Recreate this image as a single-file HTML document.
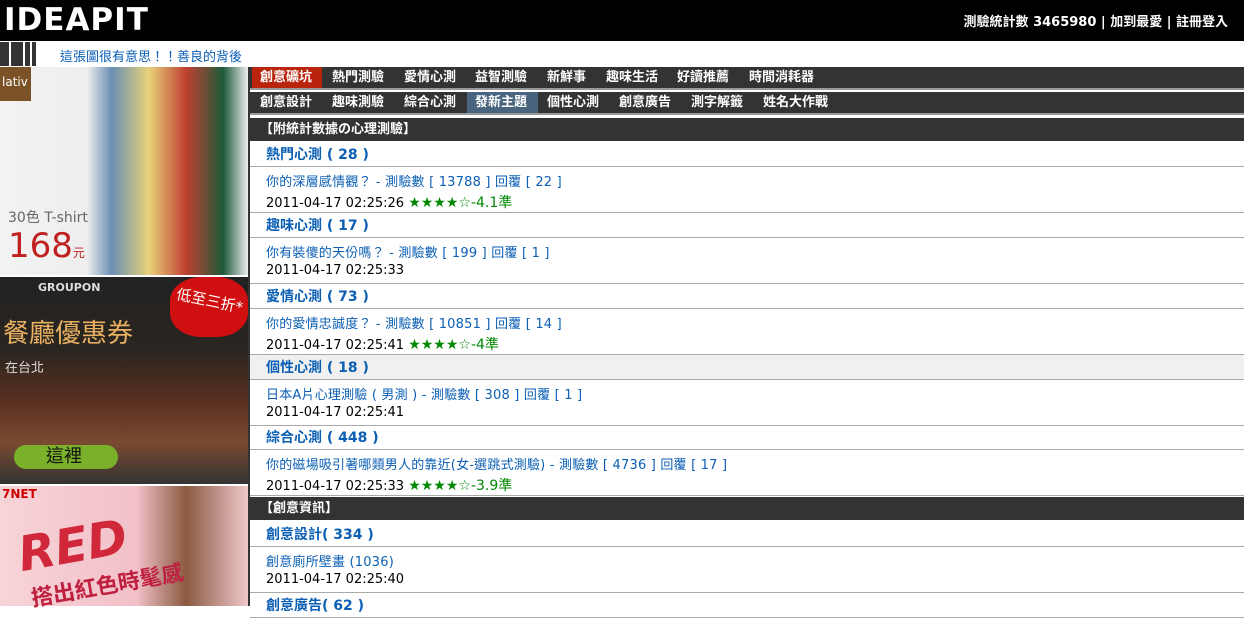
<!DOCTYPE html>
<html><head><meta charset="utf-8"><style>
*{margin:0;padding:0;box-sizing:border-box}
body{width:1244px;height:606px;overflow:hidden;background:#fff;font-family:"DejaVu Sans","Noto Sans CJK TC",sans-serif;position:relative}
.a{position:absolute}
#hd{left:0;top:0;width:1244px;height:41px;background:#000}
#logo{left:4px;top:2px;color:#fff;font-family:"DejaVu Sans",sans-serif;font-weight:bold;font-size:31px;letter-spacing:1px;line-height:36px}
#tr{right:16px;top:11px;color:#fff;font-size:13px;font-weight:bold}
.bars{left:0;top:42px;height:24px}
.bars i{position:absolute;top:0;width:9px;height:24px;background:#333}
#news{left:60px;top:46px;color:#0b5fb4;font-size:13px}
.nav{left:250px;width:994px;height:23px;background:#333;color:#fff;font-size:13px;font-weight:bold;border-bottom:2px solid #999}
.nav span{position:absolute;top:0;height:21px;line-height:21px;padding:0 8px}
.sec{left:250px;width:994px;height:23px;background:#333;color:#fff;font-size:13px;font-weight:bold;line-height:23px;padding-left:10px}
.cat{left:250px;width:994px;height:25px;border-bottom:1px solid #aaa;color:#0b5fb4;font-weight:bold;font-size:14px;line-height:27px;padding-left:16px}
.it{left:250px;width:994px;height:46px;border-bottom:1px solid #aaa;font-size:13px;padding-left:16px}
.it .l{color:#0b5fb4;position:absolute;top:4px;left:16px;white-space:nowrap;letter-spacing:0.2px}
.it .d{color:#000;position:absolute;top:25px;left:16px;white-space:nowrap}
.g{color:#080;font-size:14px}
#vl{left:248px;top:67px;width:2px;height:539px;background:#333}
</style></head><body>
<div id="hd" class="a"></div>
<div id="logo" class="a">IDEAPIT</div>
<div id="tr" class="a">測驗統計數 3465980 | 加到最愛 | 註冊登入</div>
<div class="a bars"><i style="left:0"></i><i style="left:11px"></i><i style="left:18px;width:5px"></i><i style="left:25px;width:5px"></i><i style="left:32px;width:4px"></i></div>
<div id="news" class="a">這張圖很有意思！！善良的背後</div>

<div class="a" style="left:0;top:67px;width:248px;height:208px;background:linear-gradient(90deg,#f2f2f2 0,#eee 35%,#6a8fb4 45%,#e8d27a 60%,#c04030 75%,#1d5a3a 90%,#eee 100%)"></div>
<div class="a" style="left:0;top:67px;width:31px;height:34px;background:#7a5226;color:#fff;font-size:12px;padding:8px 2px">lativ</div>
<div class="a" style="left:8px;top:207px;color:#666;font-size:14px">30色 T-shirt</div>
<div class="a" style="left:8px;top:226px;color:#c02020;font-size:34px">168<span style="font-size:12px">元</span></div>
<div class="a" style="left:0;top:277px;width:248px;height:207px;background:linear-gradient(180deg,#222 0,#2a2520 35%,#5a3020 60%,#7a4a30 80%,#333 100%)"></div>
<div class="a" style="left:170px;top:277px;width:78px;height:60px;background:#d01010;border-radius:40%"></div>
<div class="a" style="left:176px;top:290px;color:#fff;font-size:15px;transform:rotate(12deg)">低至三折*</div>
<div class="a" style="left:38px;top:281px;color:#ddd;font-size:11px;font-weight:bold">GROUPON</div>
<div class="a" style="left:3px;top:313px;color:#e8b060;font-size:26px">餐廳優惠券</div>
<div class="a" style="left:5px;top:357px;color:#ddd;font-size:13px">在台北</div>
<div class="a" style="left:14px;top:445px;width:104px;height:24px;background:#7ab02a;border-radius:12px;color:#111;font-size:18px;padding-left:32px;line-height:24px">這裡</div>
<div class="a" style="left:0;top:486px;width:248px;height:120px;background:linear-gradient(90deg,#f7d4d8 0,#f2c0c8 55%,#8a5a40 75%,#f0c8cc 100%)"></div>
<div class="a" style="left:18px;top:518px;color:#d0283a;font-size:48px;font-weight:bold;font-style:italic;transform:rotate(-10deg)">RED</div>
<div class="a" style="left:2px;top:487px;color:#c00;font-size:12px;font-weight:bold">7NET</div>
<div class="a" style="left:30px;top:568px;color:#c02040;font-size:22px;font-weight:bold;transform:rotate(-10deg)">搭出紅色時髦感</div>
<div id="vl" class="a"></div>

<div class="a nav" style="top:67px"><span style="left:2px;background:#b8250c;width:70px">創意礦坑</span><span style="left:74px">熱門測驗</span><span style="left:146px">愛情心測</span><span style="left:217px">益智測驗</span><span style="left:289px">新鮮事</span><span style="left:348px">趣味生活</span><span style="left:419px">好讀推薦</span><span style="left:491px">時間消耗器</span></div>
<div class="a nav" style="top:92px"><span style="left:2px">創意設計</span><span style="left:74px">趣味測驗</span><span style="left:146px">綜合心測</span><span style="left:217px;background:#48647e;width:71px">發新主題</span><span style="left:289px">個性心測</span><span style="left:361px">創意廣告</span><span style="left:433px">測字解籤</span><span style="left:505px">姓名大作戰</span></div>

<div class="a sec" style="top:118px">【附統計數據の心理測驗】</div>
<div class="a cat" style="top:142px">熱門心測 ( 28 )</div>
<div class="a it" style="top:167px"><span class="l">你的深層感情觀？ - 測驗數 [ 13788 ] 回覆 [ 22 ]</span><span class="d">2011-04-17 02:25:26 <span class="g">★★★★☆-4.1準</span></span></div>
<div class="a cat" style="top:213px">趣味心測 ( 17 )</div>
<div class="a it" style="top:238px"><span class="l">你有裝傻的天份嗎？ - 測驗數 [ 199 ] 回覆 [ 1 ]</span><span class="d">2011-04-17 02:25:33</span></div>
<div class="a cat" style="top:284px">愛情心測 ( 73 )</div>
<div class="a it" style="top:309px"><span class="l">你的愛情忠誠度？ - 測驗數 [ 10851 ] 回覆 [ 14 ]</span><span class="d">2011-04-17 02:25:41 <span class="g">★★★★☆-4準</span></span></div>
<div class="a cat" style="top:355px;background:#f0f0f0">個性心測 ( 18 )</div>
<div class="a it" style="top:380px"><span class="l">日本A片心理測驗 ( 男測 ) - 測驗數 [ 308 ] 回覆 [ 1 ]</span><span class="d">2011-04-17 02:25:41</span></div>
<div class="a cat" style="top:425px">綜合心測 ( 448 )</div>
<div class="a it" style="top:450px"><span class="l">你的磁場吸引著哪類男人的靠近(女-選跳式測驗) - 測驗數 [ 4736 ] 回覆 [ 17 ]</span><span class="d">2011-04-17 02:25:33 <span class="g">★★★★☆-3.9準</span></span></div>
<div class="a sec" style="top:497px">【創意資訊】</div>
<div class="a cat" style="top:522px">創意設計( 334 )</div>
<div class="a it" style="top:547px"><span class="l">創意廁所壁畫 (1036)</span><span class="d">2011-04-17 02:25:40</span></div>
<div class="a cat" style="top:593px">創意廣告( 62 )</div>
</body></html>
